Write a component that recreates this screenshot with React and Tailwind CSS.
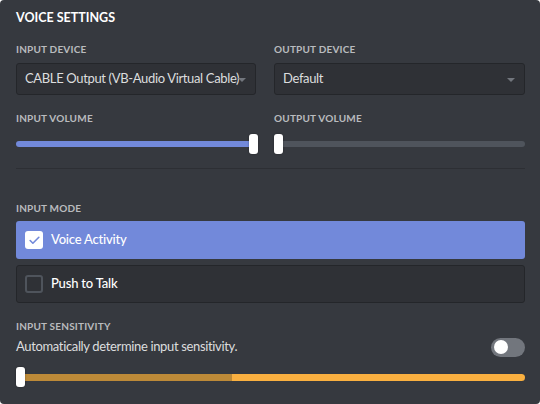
import { Check } from 'lucide-react'

function Label({ children, className = '' }) {
  return (
    <div className={"h-[12px] text-[10px] leading-[12px] font-bold tracking-[0.02em] uppercase text-[#b9bbbe] " + className}>
      {children}
    </div>
  )
}

function Select({ value }) {
  return (
    <div className="relative h-[32px] rounded-[3px] bg-[#2f3136] border border-[#24262a] flex items-center pl-[8px] overflow-hidden">
      <span className="text-[13px] tracking-[-0.35px] text-[#dcddde] whitespace-nowrap">{value}</span>
      <span className="absolute right-[9px] top-[14px] w-0 h-0 border-l-[4px] border-r-[4px] border-t-[4px] border-l-transparent border-r-transparent border-t-[#72767d]"></span>
    </div>
  )
}

function Knob() {
  return <div className="w-[9px] h-[20px] rounded-[3px] bg-white shadow-[0_0_2px_rgba(0,0,0,0.4)]"></div>
}

function ModeRow({ checked, label }) {
  return (
    <div className={
      "h-[38px] rounded-[3px] flex items-center gap-[8px] " +
      (checked ? "bg-[#7289da] pl-[9px]" : "bg-[#2f3136] border border-[#24262a] pl-[8px]")
    }>
      {checked ? (
        <div className="w-[18px] h-[18px] rounded-[3px] bg-white flex items-center justify-center">
          <Check size={13} strokeWidth={3} color="#7289da" />
        </div>
      ) : (
        <div className="w-[18px] h-[18px] rounded-[3px] border-2 border-[#4f545c]"></div>
      )}
      <span className="text-[13px] tracking-[-0.2px] font-medium text-white">{label}</span>
    </div>
  )
}

export default function App() {
  return (
    <div className="w-[540px] h-[404px] bg-white" style={{ fontFamily: 'Lato, "Noto Sans", sans-serif' }}>
      <div className="w-full h-full rounded-[4px] bg-[#36393f] px-[16px] pr-[15px] pt-[10px]">
        <h2 className="h-[16px] text-[12.5px] leading-[16px] font-bold text-white uppercase">Voice Settings</h2>

        <div className="grid grid-cols-[240px_1fr] gap-x-[18px] mt-[17px]">
          <div>
            <Label>Input Device</Label>
            <div className="mt-[8px]">
              <Select value="CABLE Output (VB-Audio Virtual Cable)" />
            </div>
          </div>
          <div>
            <Label>Output Device</Label>
            <div className="mt-[8px]">
              <Select value="Default" />
            </div>
          </div>
        </div>

        <div className="grid grid-cols-[240px_1fr] gap-x-[18px] mt-[17px]">
          <div>
            <Label>Input Volume</Label>
            <div className="relative h-[20px] mt-[10px] flex items-center">
              <div className="w-full h-[6px] rounded-full bg-[#7289da]"></div>
              <div className="absolute left-[233px] top-0"><Knob /></div>
            </div>
          </div>
          <div>
            <Label>Output Volume</Label>
            <div className="relative h-[20px] mt-[10px] flex items-center">
              <div className="w-full h-[6px] rounded-full bg-[#4f545c]"></div>
              <div className="absolute left-0 top-0"><Knob /></div>
            </div>
          </div>
        </div>

        <div className="h-px bg-[#2d2f34] mt-[14px]"></div>

        <Label className="mt-[33px]">Input Mode</Label>
        <div className="mt-[7px] flex flex-col gap-[6px]">
          <ModeRow checked label="Voice Activity" />
          <ModeRow label="Push to Talk" />
        </div>

        <Label className="mt-[17px]">Input Sensitivity</Label>
        <div className="mt-[5px] flex items-center justify-between h-[20px]">
          <span className="text-[13px] tracking-[-0.35px] text-[#dcddde]">Automatically determine input sensitivity.</span>
          <div className="w-[34px] h-[19px] rounded-full bg-[#72767d] flex items-center pl-[3px]">
            <div className="w-[14px] h-[14px] rounded-full bg-white"></div>
          </div>
        </div>

        <div className="relative h-[20px] mt-[10px] flex items-center">
          <div className="w-full h-[7px] rounded-full overflow-hidden flex">
            <div className="w-[216px] bg-[#bd8a38]"></div>
            <div className="flex-1 bg-[#fab040]"></div>
          </div>
          <div className="absolute left-0 top-0"><Knob /></div>
        </div>
      </div>
    </div>
  )
}
